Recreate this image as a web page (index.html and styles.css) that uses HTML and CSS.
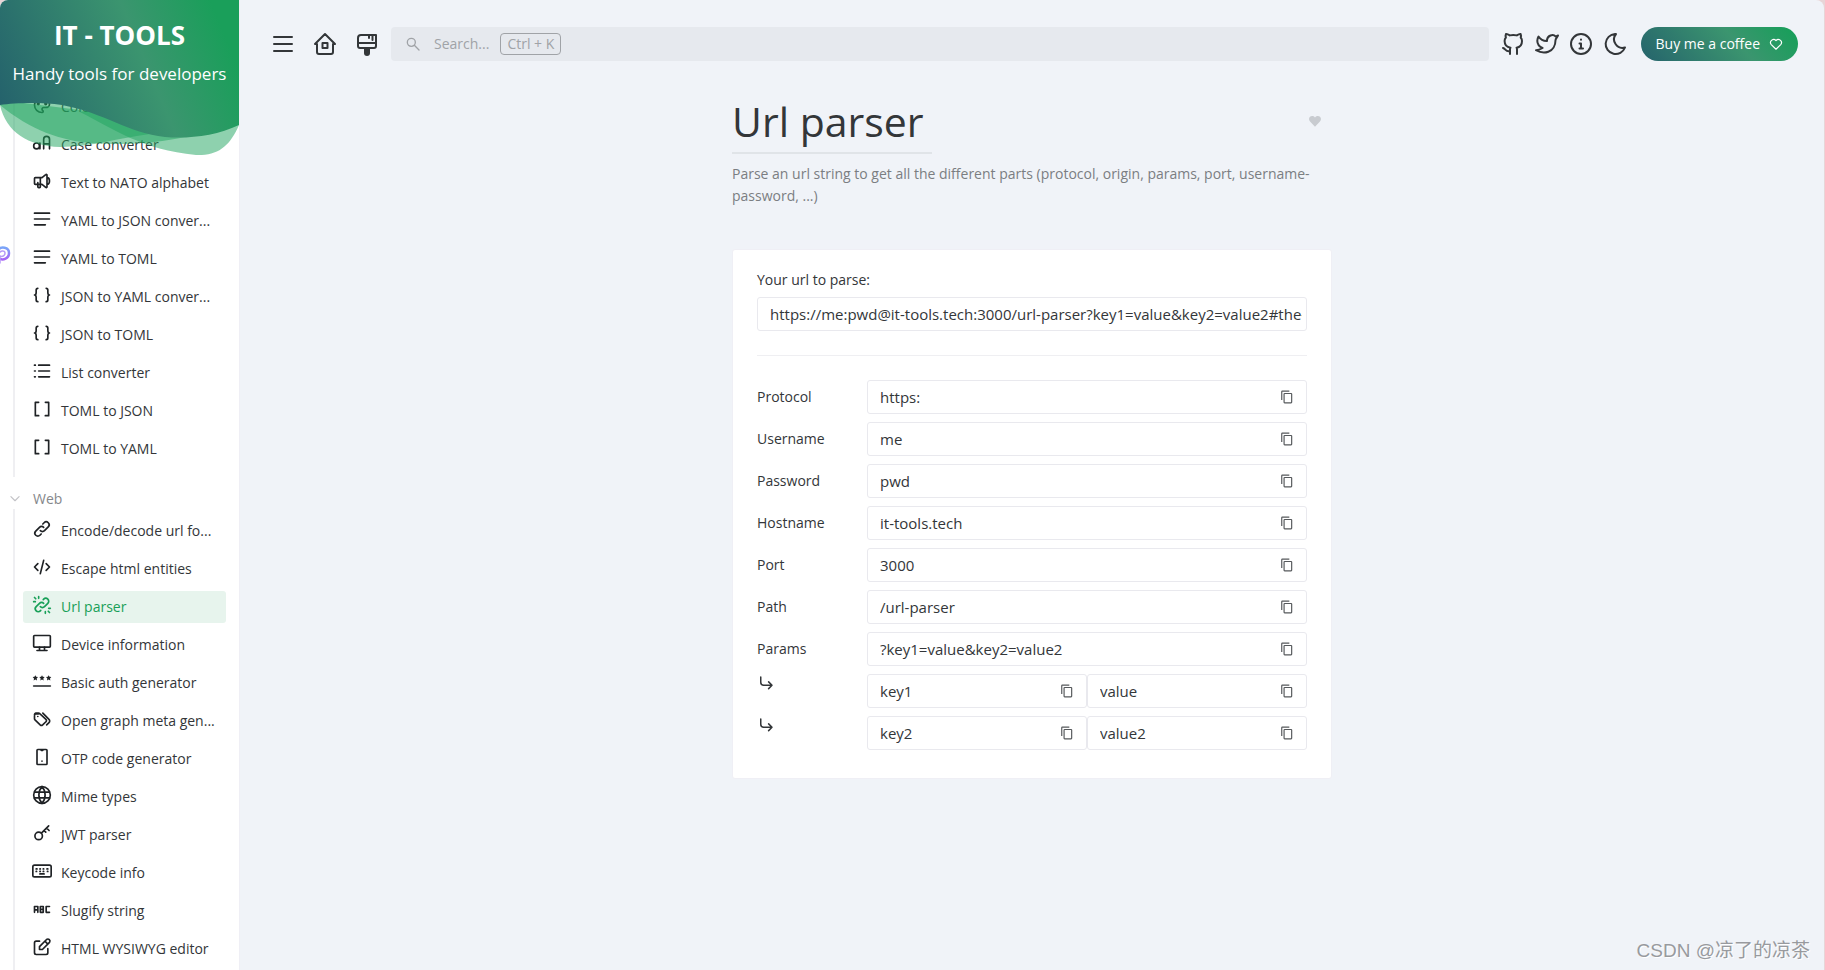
FILE: index.html
```html
<!DOCTYPE html>
<html lang="en">
<head>
<meta charset="utf-8">
<title>Url parser - IT Tools</title>
<link rel="stylesheet" href="styles.css">
</head>
<body>
<svg class="sprite" aria-hidden="true">
  <symbol id="i-palette" viewBox="0 0 24 24"><path d="M12 21a9 9 0 1 1 0-18a9 8 0 0 1 9 8a4.500 4 0 0 1-4.500 4H14a2 2 0 0 0-1 3.750A1.300 1.300 0 0 1 12 21"/><circle cx="7.500" cy="10.500" r="1"/><circle cx="12" cy="7.500" r="1"/><circle cx="16.500" cy="10.500" r="1"/></symbol>
  <symbol id="i-case" viewBox="0 0 24 24"><circle cx="5.500" cy="15.500" r="3.500"/><path d="M9.500 12v7M14 19V7.500a3.500 3.500 0 0 1 7 0V19M14 13h7"/></symbol>
  <symbol id="i-horn" viewBox="0 0 24 24"><path d="M18 8a3 4 0 0 1 0 8M10 8v11a1 1 0 0 1-1 1H8a1 1 0 0 1-1-1v-5M12 8l4.500-3.700A.9.9 0 0 1 18 5v14a.9.9 0 0 1-1.500.7L12 16H4a1 1 0 0 1-1-1V9a1 1 0 0 1 1-1z"/></symbol>
  <symbol id="i-lines" viewBox="0 0 24 24"><path d="M3 5h18M3 12h18M3 19h13"/></symbol>
  <symbol id="i-braces" viewBox="0 0 24 24"><path d="M7 4a2 2 0 0 0-2 2v3a2 3 0 0 1-2 3a2 3 0 0 1 2 3v3a2 2 0 0 0 2 2M17 4a2 2 0 0 1 2 2v3a2 3 0 0 0 2 3a2 3 0 0 0-2 3v3a2 2 0 0 1-2 2"/></symbol>
  <symbol id="i-list" viewBox="0 0 24 24"><path d="M8 5h13M8 12h13M8 19h13M3 5h1M3 12h1M3 19h1"/></symbol>
  <symbol id="i-brackets" viewBox="0 0 24 24"><path d="M8 4H4v16h4M16 4h4v16h-4"/></symbol>
  <symbol id="i-link" viewBox="0 0 24 24"><path d="M10 14a3.500 3.500 0 0 0 5 0l4.500-4.500a3.500 3.500 0 0 0-5-5L13 6M14 10a3.500 3.500 0 0 0-5 0l-4.500 4.500a3.500 3.500 0 0 0 5 5L11 18"/></symbol>
  <symbol id="i-code" viewBox="0 0 24 24"><path d="M7 8l-4 4l4 4M17 8l4 4l-4 4M14 4l-4 16"/></symbol>
  <symbol id="i-unlink" viewBox="0 0 24 24"><path d="M10 14a3.500 3.500 0 0 0 5 0l4-4a3.500 3.500 0 0 0-5-5l-.5.5M14 10a3.500 3.500 0 0 0-5 0l-4 4a3.500 3.500 0 0 0 5 5l.5-.5M16 22v-2M20 16h2M2 8h2M8 2v2M19.500 19.500l1.500 1.500M3 3l1.500 1.500"/></symbol>
  <symbol id="i-desktop" viewBox="0 0 24 24"><rect x="2" y="3" width="20" height="14" rx="1"/><path d="M6 21h12M9 17v4M15 17v4"/></symbol>
  <symbol id="i-password" viewBox="0 0 24 24"><path d="M2 18h20"/><path class="solid" d="M4 5l1 2 2.200.3-1.600 1.700.4 2.300L4 10.200l-2 1.100.4-2.300L.8 7.300 3 7zM12 5l1 2 2.200.3-1.600 1.700.4 2.300-2-1.100-2 1.100.4-2.300-1.600-1.700L11 7zM20 5l1 2 2.200.3-1.600 1.700.4 2.300-2-1.100-2 1.100.4-2.300-1.600-1.700L19 7z"/></symbol>
  <symbol id="i-tags" viewBox="0 0 24 24"><path d="M7.800 6H4a2 2 0 0 0-1 1.700v3.900a2 2 0 0 0 .6 1.400l6.200 6.100a2.200 2.200 0 0 0 3 0l3.900-3.800a2 2 0 0 0 0-3L9.300 5.600A2 2 0 0 0 7.800 5H4.500A2 2 0 0 0 3 6.500M17.600 19l2.800-2.700a2.600 2.600 0 0 0 0-3.800L13 5"/><path d="M7 9h-.1"/></symbol>
  <symbol id="i-phone" viewBox="0 0 24 24"><rect x="6" y="3" width="12" height="18" rx="1"/><path d="M11 4h2M12 17v.1"/></symbol>
  <symbol id="i-globe" viewBox="0 0 24 24"><circle cx="12" cy="12" r="10"/><path d="M3 8.500h18M3 15.500h18M12 2c-5 5.500-5 14.500 0 20M12 2c5 5.500 5 14.500 0 20"/></symbol>
  <symbol id="i-key" viewBox="0 0 24 24"><circle cx="8" cy="15.500" r="4.500"/><path d="M11.300 12.200L20 3.500M17.500 6l3 3M14.500 9l2 2"/></symbol>
  <symbol id="i-keyboard" viewBox="0 0 24 24"><rect x="1" y="5" width="22" height="14" rx="2"/><path d="M5 9.500h1M9.500 9.500h.5M13.500 9.500h.5M18 9.500h1M5 12.500h.5M9.500 12.500h.5M13.500 12.500h.5M18.500 12.500h.5M9.500 15.500h5"/></symbol>
  <symbol id="i-abc" viewBox="0 0 24 24"><path d="M3 16V9h4v7M3 13h4M10 9h3.500v7H10zM10 12.500h3.500M21 9h-4v7h4"/></symbol>
  <symbol id="i-edit" viewBox="0 0 24 24"><path d="M9 5H5a2 2 0 0 0-2 2v12a2 2 0 0 0 2 2h12a2 2 0 0 0 2-2v-5M9 15v-3.500l8.500-8.500a2.500 2.500 0 0 1 3.500 3.500L12.500 15zM15.500 5l3.500 3.500"/></symbol>
  <symbol id="i-copy" viewBox="0 0 24 24"><path class="solid" d="M16 1H4a2 2 0 0 0-2 2v14h2V3h12zm3 4H8a2 2 0 0 0-2 2v14a2 2 0 0 0 2 2h11a2 2 0 0 0 2-2V7a2 2 0 0 0-2-2m0 16H8V7h11z"/></symbol>
  <symbol id="i-corner" viewBox="0 0 24 24"><path d="M5 4v7a4 4 0 0 0 4 4h11M15.500 10.500L20 15l-4.500 4.500"/></symbol>
  <symbol id="i-chevron" viewBox="0 0 24 24"><path d="M5 8l7 7l7-7"/></symbol>
</svg>

<div class="app">
  <aside class="sidebar">
    <a class="hero" href="#">
      <svg class="hero-shape" viewBox="0 0 239 155" preserveAspectRatio="none" aria-hidden="true">
        <defs>
          <linearGradient id="g" gradientUnits="userSpaceOnUse" x1="0" y1="98" x2="214" y2="9">
            <stop offset="0" stop-color="#25636c"/><stop offset=".64" stop-color="#3b956f"/><stop offset="1" stop-color="#1a9f5a"/>
          </linearGradient>
        </defs>
        <g fill="#1da35e" fill-opacity=".5">
          <path d="M0 105C6 132 28 146 60 147C92 147 118 138 150 134L160 120L0 100z"/>
          <path d="M0 105C30 130 62 141 92 143C130 146 160 142 185 137L150 100L0 100z"/>
          <path d="M80 112C112 128 142 150 196 155C218 156 230 146 239 125L200 100z"/>
        </g>
        <path fill="url(#g)" d="M0 0H239V125C216 136 188 139 165 137C128 133 105 113 62 105C40 102 15 103 0 105z"/>
      </svg>
      <span class="hero-text">
        <span class="hero-title">IT - TOOLS</span>
        <span class="hero-sub">Handy tools for developers</span>
      </span>
    </a>
    <nav class="menu">
      <div class="group">
        <a class="item" href="#"><svg class="icon"><use href="#i-palette"/></svg><span>Color converter</span></a>
        <a class="item" href="#"><svg class="icon"><use href="#i-case"/></svg><span>Case converter</span></a>
        <a class="item" href="#"><svg class="icon"><use href="#i-horn"/></svg><span>Text to NATO alphabet</span></a>
        <a class="item" href="#"><svg class="icon"><use href="#i-lines"/></svg><span>YAML to JSON conver...</span></a>
        <a class="item" href="#"><svg class="icon"><use href="#i-lines"/></svg><span>YAML to TOML</span></a>
        <a class="item" href="#"><svg class="icon"><use href="#i-braces"/></svg><span>JSON to YAML conver...</span></a>
        <a class="item" href="#"><svg class="icon"><use href="#i-braces"/></svg><span>JSON to TOML</span></a>
        <a class="item" href="#"><svg class="icon"><use href="#i-list"/></svg><span>List converter</span></a>
        <a class="item" href="#"><svg class="icon"><use href="#i-brackets"/></svg><span>TOML to JSON</span></a>
        <a class="item" href="#"><svg class="icon"><use href="#i-brackets"/></svg><span>TOML to YAML</span></a>
      </div>
      <button class="group-title" type="button"><svg class="chevron"><use href="#i-chevron"/></svg>Web</button>
      <div class="group">
        <a class="item" href="#"><svg class="icon"><use href="#i-link"/></svg><span>Encode/decode url fo...</span></a>
        <a class="item" href="#"><svg class="icon"><use href="#i-code"/></svg><span>Escape html entities</span></a>
        <a class="item active" href="#"><svg class="icon"><use href="#i-unlink"/></svg><span>Url parser</span></a>
        <a class="item" href="#"><svg class="icon"><use href="#i-desktop"/></svg><span>Device information</span></a>
        <a class="item" href="#"><svg class="icon"><use href="#i-password"/></svg><span>Basic auth generator</span></a>
        <a class="item" href="#"><svg class="icon"><use href="#i-tags"/></svg><span>Open graph meta gen...</span></a>
        <a class="item" href="#"><svg class="icon"><use href="#i-phone"/></svg><span>OTP code generator</span></a>
        <a class="item" href="#"><svg class="icon"><use href="#i-globe"/></svg><span>Mime types</span></a>
        <a class="item" href="#"><svg class="icon"><use href="#i-key"/></svg><span>JWT parser</span></a>
        <a class="item" href="#"><svg class="icon"><use href="#i-keyboard"/></svg><span>Keycode info</span></a>
        <a class="item" href="#"><svg class="icon"><use href="#i-abc"/></svg><span>Slugify string</span></a>
        <a class="item" href="#"><svg class="icon"><use href="#i-edit"/></svg><span>HTML WYSIWYG editor</span></a>
      </div>
    </nav>
    <svg class="bubble" viewBox="0 0 12 20" aria-hidden="true">
      <defs><linearGradient id="b" x1="0" y1="0" x2="0" y2="1"><stop offset="0" stop-color="#7aa5f8"/><stop offset="1" stop-color="#a765f5"/></linearGradient></defs>
      <path d="M-2 4C1 0 9 1 9 7C9 13 3 14 0 13" fill="none" stroke="url(#b)" stroke-width="2.500"/>
      <path d="M-2 9C0 4 5 4 5 7C5 10 2 11 0 10V17" fill="none" stroke="#b79bf8" stroke-width="1.500"/>
    </svg>
  </aside>

  <main class="main">
    <header class="topbar">
      <div class="nav-left">
        <button class="icon-btn" type="button" aria-label="Toggle menu"><svg viewBox="0 0 24 24"><path d="M3 5h18M3 12h18M3 19h18"/></svg></button>
        <button class="icon-btn" type="button" aria-label="Home"><svg viewBox="0 0 24 24"><path d="M4 12H2l10-10l10 10h-2M4 12v8a2 2 0 0 0 2 2h12a2 2 0 0 0 2-2v-8"/><rect x="9.500" y="11" width="5" height="5"/></svg></button>
        <button class="icon-btn" type="button" aria-label="UI library"><svg viewBox="0 0 24 24"><path d="M3 10.500V6a3 3 0 0 1 3-3h15v11a2 2 0 0 1-2 2H5a2 2 0 0 1-2-2zM3 11h18M14 3v3M17.500 3v5"/><path class="solid" d="M9 16h6v5a3 3 0 0 1-6 0z"/></svg></button>
      </div>
      <button class="search" type="button">
        <svg viewBox="0 0 24 24"><circle cx="9.500" cy="9.500" r="6"/><path d="M14 14l7 7"/></svg>
        <span>Search...</span><kbd>Ctrl + K</kbd>
      </button>
      <div class="nav-right">
        <a class="icon-btn" href="#" aria-label="GitHub"><svg viewBox="0 0 24 24"><path d="M9 19c-4.300 1.400-4.300-2.500-7-3m14 6v-4c0-1 .1-1.600-.5-2.300c3-.4 5.500-1.500 5.500-6.700a5 5 0 0 0-1.300-3.500A4.700 4.700 0 0 0 19.600 2s-1.200-.3-3.800 1.400a13 13 0 0 0-7 0C6.200 1.700 5 2 5 2a4.700 4.700 0 0 0-.1 3.500A5 5 0 0 0 3.600 9c0 5 2.500 6.200 5.900 6.700c-.6.6-.6 1.200-.5 2.300v4"/></svg></a>
        <a class="icon-btn" href="#" aria-label="Twitter"><svg viewBox="0 0 24 24"><path d="M23 3.500c-1 .5-1.500.8-2.500.9c-1.200-1.400-3.200-1.600-5-.9S12.200 6.200 12 8v1c-3.500.1-6.500-1.500-8.500-4.500c0 0-4.500 7.500 4 11.500c-2 1.300-3.800 2.200-6.500 2.200c4 2.300 8.500 2.900 12.300 1.500c4.400-1.500 7.200-6.200 7.200-11.500c0-1.500 2-3 2.500-4.700z"/></svg></a>
        <a class="icon-btn" href="#" aria-label="About"><svg viewBox="0 0 24 24"><circle cx="12" cy="12" r="10"/><path d="M12 7.500v.2M10.500 11.500H12v5M10.500 16.500h3.500"/></svg></a>
        <button class="icon-btn" type="button" aria-label="Dark mode"><svg viewBox="0 0 24 24"><path d="M13 2h-1a10 10 0 1 0 10 13.500A8.500 8.500 0 0 1 13 2z"/></svg></button>
        <a class="coffee" href="#">Buy me a coffee <svg viewBox="0 0 24 24"><path d="M12 21l-8.500-8.500a5.300 5.300 0 0 1 8.500-6.300a5.300 5.300 0 0 1 8.500 6.300z"/></svg></a>
      </div>
    </header>

    <section class="tool">
      <div class="tool-head">
        <h1>Url parser</h1>
        <button class="fav" type="button" aria-label="Favorite"><svg viewBox="0 0 24 24"><path class="solid" d="M12 22L3.500 13C-2 6 7 0 12 6c5-6 14 0 8.500 7z"/></svg></button>
      </div>
      <div class="rule"></div>
      <p class="desc">Parse an url string to get all the different parts (protocol, origin, params, port, username-password, ...)</p>
      <div class="card">
        <label class="label" for="url">Your url to parse:</label>
        <div class="field"><input id="url" value="https://me:pwd@it-tools.tech:3000/url-parser?key1=value&amp;key2=value2#the-hash"></div>
        <hr>
        <div class="rows">
          <div class="row"><label for="f1">Protocol</label><div class="field"><input id="f1" readonly value="https:"><button type="button" aria-label="Copy"><svg><use href="#i-copy"/></svg></button></div></div>
          <div class="row"><label for="f2">Username</label><div class="field"><input id="f2" readonly value="me"><button type="button" aria-label="Copy"><svg><use href="#i-copy"/></svg></button></div></div>
          <div class="row"><label for="f3">Password</label><div class="field"><input id="f3" readonly value="pwd"><button type="button" aria-label="Copy"><svg><use href="#i-copy"/></svg></button></div></div>
          <div class="row"><label for="f4">Hostname</label><div class="field"><input id="f4" readonly value="it-tools.tech"><button type="button" aria-label="Copy"><svg><use href="#i-copy"/></svg></button></div></div>
          <div class="row"><label for="f5">Port</label><div class="field"><input id="f5" readonly value="3000"><button type="button" aria-label="Copy"><svg><use href="#i-copy"/></svg></button></div></div>
          <div class="row"><label for="f6">Path</label><div class="field"><input id="f6" readonly value="/url-parser"><button type="button" aria-label="Copy"><svg><use href="#i-copy"/></svg></button></div></div>
          <div class="row"><label for="f7">Params</label><div class="field"><input id="f7" readonly value="?key1=value&amp;key2=value2"><button type="button" aria-label="Copy"><svg><use href="#i-copy"/></svg></button></div></div>
          <div class="row"><svg class="corner"><use href="#i-corner"/></svg><div class="field"><input aria-label="Key 1" readonly value="key1"><button type="button" aria-label="Copy"><svg><use href="#i-copy"/></svg></button></div><div class="field"><input aria-label="Value 1" readonly value="value"><button type="button" aria-label="Copy"><svg><use href="#i-copy"/></svg></button></div></div>
          <div class="row"><svg class="corner"><use href="#i-corner"/></svg><div class="field"><input aria-label="Key 2" readonly value="key2"><button type="button" aria-label="Copy"><svg><use href="#i-copy"/></svg></button></div><div class="field"><input aria-label="Value 2" readonly value="value2"><button type="button" aria-label="Copy"><svg><use href="#i-copy"/></svg></button></div></div>
        </div>
      </div>
    </section>
    <div class="watermark">CSDN @凉了的凉茶</div>
  </main>
</div>
</body>
</html>
```
FILE: styles.css
```css
* { box-sizing: border-box; }

body {
  margin: 0;
  background: #e8d5d7;
  color: #333639;
  font: 14px/22px "Segoe UI", "Open Sans", "Noto Sans CJK SC", sans-serif;
}

a { color: inherit; text-decoration: none; }
button, input { font: inherit; color: inherit; }
button { padding: 0; border: 0; background: none; cursor: pointer; }
svg { display: block; flex: none; fill: none; stroke: currentColor; stroke-width: 2; stroke-linecap: round; stroke-linejoin: round; }
.solid { fill: currentColor; stroke: none; }
.sprite { position: absolute; width: 0; height: 0; }

.app {
  display: flex;
  height: 100vh;
  margin-right: 1px;
  border-radius: 8px 8px 0 0;
  overflow: hidden;
  background: #f0f3f8;
}

/* Sidebar */
.sidebar {
  position: relative;
  flex: none;
  width: 240px;
  overflow: hidden;
  background: #fff;
  border-right: 1px solid #efeff5;
}
.hero { position: absolute; top: 0; left: 0; width: 239px; z-index: 1; color: #fff; }
.hero-shape { width: 100%; height: 155px; stroke: none; }
.hero-text {
  position: absolute;
  inset: 0;
  display: flex;
  flex-direction: column;
  align-items: center;
  padding-top: 17px;
  white-space: nowrap;
}
.hero-title { font-size: 26px; line-height: 36px; font-weight: 700; }
.hero-sub { margin-top: 10px; font-size: 17px; line-height: 22px; }

.menu { padding-top: 91px; }
.group {
  display: flex;
  flex-direction: column;
  gap: 6px;
  margin-left: 13px;
  padding: 0 13px 12px 8px;
  border-left: 2px solid #efeff2;
}
.group-title + .group { padding-top: 6px; }
.item {
  display: flex;
  align-items: center;
  gap: 9px;
  height: 32px;
  flex: none;
  padding-left: 9px;
  border-radius: 3px;
  white-space: nowrap;
}
.item.active { background: #e7f4ed; color: #18a058; }
.icon { width: 20px; height: 20px; margin-bottom: 4px; color: #1f2225; }
.active .icon { color: inherit; }
.group-title {
  display: flex;
  align-items: center;
  gap: 11px;
  height: 32px;
  padding: 12px 0 0 8px;
  color: #86888b;
  line-height: 20px;
}
.chevron { width: 14px; height: 14px; color: #c2c2c6; }

.bubble { position: absolute; left: 0; top: 246px; width: 12px; height: 20px; }

/* Main column */
.main { position: relative; flex: 1; min-width: 0; padding: 27px 26px; }
.topbar { display: flex; align-items: center; }
.icon-btn { display: block; }
.icon-btn svg { width: 24px; height: 24px; }
.nav-left { display: flex; gap: 18px; padding: 0 12px 0 5px; }
.nav-right { display: flex; align-items: center; gap: 10px; padding-left: 12px; }
.search {
  flex: 1;
  display: flex;
  align-items: center;
  height: 34px;
  padding-left: 14px;
  border-radius: 4px;
  background: #e6e9ee;
  color: #a0a3a7;
}
.search svg { width: 16px; height: 16px; margin-right: 13px; }
.search kbd {
  margin-left: 11px;
  padding: 0 6px;
  border: 1px solid #a0a3a7;
  border-radius: 4px;
  font: inherit;
  line-height: 20px;
}
.coffee {
  display: flex;
  align-items: center;
  gap: 9px;
  height: 34px;
  margin-left: 4px;
  padding: 0 15px;
  border-radius: 17px;
  background: linear-gradient(48deg, #25636c 0%, #3b956f 60%, #14a058 100%);
  color: #fff;
  white-space: nowrap;
}
.coffee svg { width: 14px; height: 14px; }

/* Tool */
.tool { max-width: 600px; margin: 29px auto 0; }
.tool-head { display: flex; align-items: center; justify-content: space-between; padding-right: 10px; }
h1 { margin: 0; font-size: 41px; line-height: 62px; font-weight: 400; }
.fav { color: #c8cbd0; }
.fav svg { width: 14px; height: 14px; }
.rule { width: 200px; height: 2px; background: #e0e4e8; }
.desc { margin: 9px 0 0; color: #7b7e82; }
.card {
  margin: 42px 0 0;
  padding: 19px 24px 28px;
  border: 1px solid #efeff5;
  border-radius: 3px;
  background: #fff;
}
.label { display: block; margin-bottom: 6px; }
.field {
  flex: 1;
  min-width: 0;
  display: flex;
  align-items: center;
  height: 34px;
  padding: 0 4px 0 12px;
  border: 1px solid #e9e9ee;
  border-radius: 3px;
  background: #fff;
}
.field input { flex: 1; min-width: 0; width: 0; padding: 0; border: 0; outline: 0; background: none; font-size: 15px; }
.field button { padding: 0 8px 0 6px; color: #55585b; }
.field button svg { width: 14px; height: 14px; }
hr { height: 1px; margin: 24px 0; border: 0; background: #efeff2; }
.rows { display: flex; flex-direction: column; gap: 8px; }
.row { display: flex; align-items: center; }
.row label { flex: none; width: 110px; }
.corner { width: 18px; height: 18px; margin-right: 92px; margin-bottom: 16px; }

.watermark {
  position: absolute;
  right: 14px;
  bottom: 6px;
  color: #989a9e;
  font: 19px/26px "Liberation Sans", "Noto Sans CJK SC", sans-serif;
  text-shadow: 1px 1px 0 #fff;
}
```
